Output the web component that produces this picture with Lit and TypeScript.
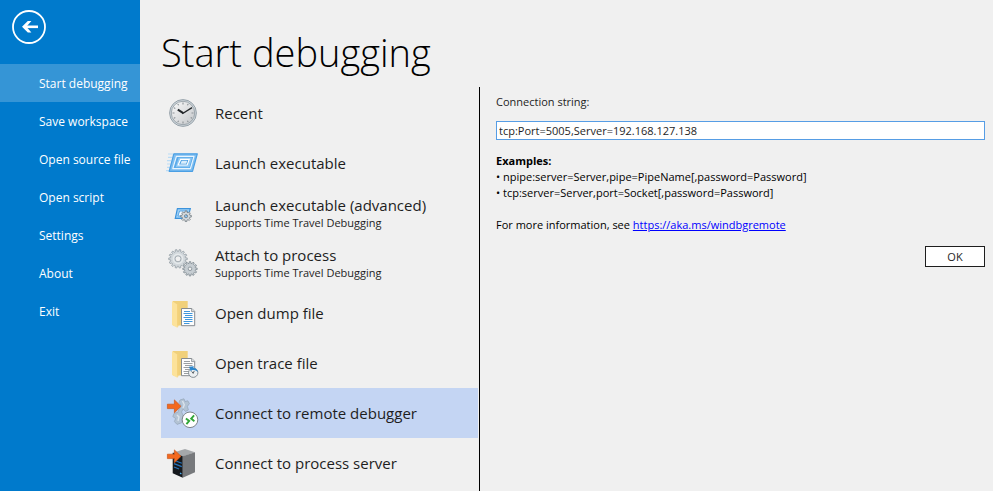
import { LitElement, html, css, svg, nothing } from "lit";
import { customElement, state } from "lit/decorators.js";
import { classMap } from "lit/directives/class-map.js";

/** Outline of a cog with square teeth around a centre point. */
function cog(cx: number, cy: number, outer: number, inner: number, teeth: number): string {
  const points: string[] = [];
  const step = (Math.PI * 2) / teeth;
  for (let i = 0; i < teeth; i++) {
    const a = i * step;
    const corners: [number, number][] = [
      [inner, -0.3],
      [outer, -0.2],
      [outer, 0.2],
      [inner, 0.3],
    ];
    for (const [r, f] of corners) {
      const t = a + f * step;
      points.push(`${(cx + r * Math.cos(t)).toFixed(2)} ${(cy + r * Math.sin(t)).toFixed(2)}`);
    }
  }
  return `M${points.join("L")}Z`;
}

const ring = (cx: number, cy: number, r: number) =>
  `M${cx - r} ${cy}a${r} ${r} 0 1 0 ${2 * r} 0a${r} ${r} 0 1 0 ${-2 * r} 0Z`;

const arrow = svg`
  <path d="M.4 7.2H7.4V2.9L14 9.3L7.4 15.8V11.6H.4Z" fill="#f4691e" stroke="#c9541a" stroke-width=".7"/>`;

const folder = svg`
  <path d="M6 4H20.7V28.5H6Z" fill="#f0d07a"/>
  <path d="M5 4L10.3 7.6V30.8L5 28Z" fill="#fce29a"/>
  <path d="M10.3 7.6V30.8L11.5 29V7Z" fill="#f5d27a"/>`;

const page = (ink: string) => svg`
  <path d="M14.5 11.5H24.8L27.7 14.4V28.7H14.5Z" fill="#fdfdfd" stroke="#858b90"/>
  <path d="M24.6 11.5V14.6H27.7" fill="#dde1e4" stroke="#858b90" stroke-width=".8"/>
  <path d="M17 14.5H23M16.5 16.5H25.5M18 18.5H25.5M16.5 20.5H25.5M18 22.5H25.5M16.5 24.5H25.5M17 26.5H22.5" stroke=${ink} fill="none"/>`;

const icons = {
  clock: svg`
    <defs>
      <linearGradient id="face" x1="0" y1="0" x2="1" y2="1">
        <stop offset="0" stop-color="#fafafa"/><stop offset="1" stop-color="#c3c6c9"/>
      </linearGradient>
    </defs>
    <circle cx="16" cy="16" r="13.4" fill="#cdd5da" stroke="#98a3ab" stroke-width="1"/>
    <circle cx="16" cy="16" r="11.7" fill="url(#face)" stroke="#8d989f" stroke-width=".8"/>
    <path d="M16 5.5V7.5M16 24.5V26.5M5.5 16H7.5M24.5 16H26.5M10.8 6.9L11.6 8.3M21.2 6.9L20.4 8.3M6.9 10.8L8.3 11.6M6.9 21.2L8.3 20.4M10.8 25.1L11.6 23.7M21.2 25.1L20.4 23.7M25.1 21.2L23.7 20.4" stroke="#8b9196" stroke-width="1.1"/>
    <path d="M10.8 12.6L16.3 16.2" stroke="#23272a" stroke-width="2"/>
    <path d="M15.3 16.7L25 10.6" stroke="#23272a" stroke-width="1.3"/>`,
  launch: svg`
    <path d="M1 7H6M1 10.3H5M0 13.7H4M0 17H3.5M0 20.3H3M-1 23.6H2" stroke="#b9dbf5" stroke-width="1.2"/>
    <path d="M6.8 6.8H30.3L25.5 24.3H2.2Z" fill="#7dbdf0" stroke="#4a9fe4" stroke-width="1.2" stroke-linejoin="round"/>
    <path d="M9.4 9.4H27L23.4 21.6H5.8Z" fill="#5aaaea" stroke="#e9f5fe" stroke-width="1.2" stroke-linejoin="round"/>
    <path d="M11.6 10.8H25L22.4 20.2H8.7Z" fill="#8cc7f4"/>
    <path d="M13.6 12.4H22.2L20.2 18H11.2Z" fill="#4c9fe3" stroke="#fff" stroke-width="1.2"/>
    <path d="M14.7 13.8H20.2L19.2 16.8H13.5Z" fill="#d9edfb"/>`,
  launchAdvanced: svg`
    <path d="M10.4 11.7H23.3L20.7 21.3H8.3Z" fill="#9fd0f6" stroke="#3c93dc" stroke-width="1.2"/>
    <path d="M12.6 14H20.6L19.3 19H10.9Z" fill="#f4faff" stroke="#5aa7e6" stroke-width="1"/>
    <path d=${cog(19, 19.2, 5.4, 4, 8) + ring(19, 19.2, 1.6)} fill="#d5dadd" stroke="#757e84" stroke-width=".8" fill-rule="evenodd"/>`,
  gears: svg`
    <path d=${cog(11, 11.8, 9.3, 7.5, 14) + ring(11, 11.8, 3)} fill="#d2d8dc" stroke="#9ca5ab" stroke-width=".9" fill-rule="evenodd"/>
    <circle cx="11" cy="11.8" r="4.6" fill="none" stroke="#e6eaec" stroke-width="1.4"/>
    <path d=${cog(23, 21.8, 7.2, 5.5, 12) + ring(23, 21.8, 1.8)} fill="#c6cdd2" stroke="#89939a" stroke-width=".9" fill-rule="evenodd"/>`,
  dump: svg`${folder}${page("#3f97dc")}`,
  trace: svg`${folder}${page("#9a9fa3")}
    <circle cx="26.2" cy="25.7" r="4.7" fill="#eceff1" stroke="#858f96" stroke-width="1"/>
    <path d="M26.2 26.4L24.6 24.4M26.2 26.4L27.2 24" stroke="#4a5258" stroke-width=".9"/>
    <path d="M22 19.8L27 19.2L26 20.8C28.8 21 30.6 22.6 30.8 25.2C29.4 23.2 27.4 22.6 25 23L23.8 24.6Z" fill="#2c86cc"/>`,
  remote: svg`
    <path d="M13 3L17 1.8L18 4.5L20.8 3.8L22.4 6.6L20.4 9.4L21.4 13L18.6 14.4L16 12L14.6 15L16 18.2L14.6 25.8L10 27.4L7.4 24.6L8.6 21.4L5.8 19.6L7.2 16.2L10.8 15.4L12.4 11.4L14.6 9L12 5.4Z" fill="#b3c3d4" stroke="#93a5b8" stroke-width=".7"/>
    <path d="M15.5 4L17.3 7.8L16 11M10 18L12 20L11 24" fill="none" stroke="#dae3ec" stroke-width="1.4"/>
    <circle cx="23" cy="22.8" r="7.8" fill="#fff" stroke="#7d8489" stroke-width="1"/>
    <path d="M18.9 21.4L22.2 23.9L19.4 27.2M27.1 18.4L24.2 21.6L27.4 24.2" fill="none" stroke="#32a637" stroke-width="1.9"/>
    ${arrow}`,
  server: svg`
    <path d="M5.7 5.7L18 2L28 5.3L15.7 9.4Z" fill="#a5a8ab"/>
    <path d="M15.7 9.2L28 5.3V25.3L15.7 30.7Z" fill="#77797c"/>
    <path d="M5.7 5.7L15.7 9.2V30.7L5.7 26.2Z" fill="#15181c"/>
    <path d="M7 13.2L14.8 16.2M7 16.6L14.8 19.6M7 20L12 22" stroke="#2674bd" stroke-width="1.2"/>
    <path d="M13 26.2L14.4 26.8" stroke="#4eb0f2" stroke-width="1.4"/>
    ${arrow}`,
};

interface Source {
  label: string;
  note?: string;
  icon: keyof typeof icons;
}

const menu = ["Start debugging", "Save workspace", "Open source file", "Open script", "Settings", "About", "Exit"];

const sources: Source[] = [
  { label: "Recent", icon: "clock" },
  { label: "Launch executable", icon: "launch" },
  { label: "Launch executable (advanced)", note: "Supports Time Travel Debugging", icon: "launchAdvanced" },
  { label: "Attach to process", note: "Supports Time Travel Debugging", icon: "gears" },
  { label: "Open dump file", icon: "dump" },
  { label: "Open trace file", icon: "trace" },
  { label: "Connect to remote debugger", icon: "remote" },
  { label: "Connect to process server", icon: "server" },
];

@customElement("app-root")
export class AppRoot extends LitElement {
  @state() private page = "Start debugging";
  @state() private source = "Connect to remote debugger";

  static styles = css`
    :host {
      display: grid;
      grid-template-columns: 140px minmax(0, 1fr);
      min-height: 100vh;
      background: #f0f0f0;
      color: #1e1e1e;
      font-family: "Segoe UI", "Open Sans", "Noto Sans", sans-serif;
      font-size: 11px;
      line-height: 16px;
    }
    button {
      font: inherit;
      color: inherit;
      margin: 0;
      border: 0;
      background: none;
      text-align: left;
    }
    .sidebar {
      background: #007acc;
      color: #fff;
    }
    .back {
      display: block;
      margin: 10px 12px 20px;
      padding: 0;
      width: 34px;
      height: 34px;
    }
    .back svg {
      display: block;
    }
    .nav {
      display: flex;
      flex-direction: column;
    }
    .nav-item {
      height: 38px;
      padding: 2px 0 0 39px;
      font-size: 12px;
      white-space: nowrap;
    }
    .nav-item.current {
      background: #3595d6;
    }
    .main {
      display: flex;
      flex-direction: column;
      padding-left: 21px;
    }
    .title {
      margin: 0;
      padding: 24px 0 7px;
      color: #000;
      font-size: 38px;
      line-height: 56px;
      font-weight: 300;
    }
    .columns {
      flex: 1;
      display: grid;
      grid-template-columns: 318px minmax(0, 1fr);
    }
    .sources {
      display: flex;
      flex-direction: column;
      padding: 1px 1px 0 0;
    }
    .source {
      display: flex;
      align-items: center;
      gap: 16px;
      height: 50px;
      padding: 0 0 0 6px;
    }
    .source.current {
      background: #c4d5f3;
    }
    .icon {
      flex: none;
      overflow: visible;
    }
    .names {
      display: flex;
      flex-direction: column;
      white-space: nowrap;
    }
    .label {
      font-size: 15px;
      line-height: 20px;
    }
    .panel {
      display: flex;
      flex-direction: column;
      border-left: 1px solid #000;
      padding: 7px 8px 0 16px;
    }
    .field {
      display: flex;
      flex-direction: column;
      gap: 11px;
    }
    .input {
      box-sizing: border-box;
      width: 100%;
      height: 19px;
      margin: 0;
      padding: 0 2px;
      border: 1px solid #569de5;
      border-radius: 0;
      outline: 0;
      background: #fff;
      color: inherit;
      font: inherit;
    }
    .help {
      margin-top: 13px;
      color: #000;
    }
    .help p {
      margin: 0;
    }
    .help ul {
      margin: 0 0 16px;
      padding: 0;
      list-style: none;
    }
    .help li::before {
      content: "• ";
    }
    .help a {
      color: #00f;
    }
    .ok {
      align-self: flex-end;
      box-sizing: border-box;
      width: 60px;
      height: 21px;
      margin-top: 13px;
      padding: 0;
      border: 1px solid #1e1e1e;
      background: #fff;
      text-align: center;
    }
  `;

  render() {
    return html`
      <aside class="sidebar">
        <button class="back" aria-label="Back">
          <svg width="34" height="34" viewBox="0 0 34 34" fill="none" stroke="#fff">
            <circle cx="17" cy="17" r="16" stroke-width="1.8" />
            <path d="M26 16.8H13" stroke-width="2.6" />
            <path d="M10 16.8L15.8 11H19.4L14.4 16.8L19.4 22.6H15.8Z" fill="#fff" stroke="none" />
          </svg>
        </button>
        <nav class="nav">
          ${menu.map(
            (name) => html`<button
              class=${classMap({ "nav-item": true, current: name === this.page })}
              @click=${() => (this.page = name)}
            >${name}</button>`
          )}
        </nav>
      </aside>
      <main class="main">
        <h1 class="title">Start debugging</h1>
        <div class="columns">
          <div class="sources">
            ${sources.map(
              (s) => html`<button
                class=${classMap({ source: true, current: s.label === this.source })}
                @click=${() => (this.source = s.label)}
              >
                <svg class="icon" width="32" height="32" viewBox="0 0 32 32" aria-hidden="true">${icons[s.icon]}</svg>
                <span class="names">
                  <span class="label">${s.label}</span>
                  ${s.note ? html`<span>${s.note}</span>` : nothing}
                </span>
              </button>`
            )}
          </div>
          <section class="panel">
            <div class="field">
              <label for="connection">Connection string:</label>
              <input id="connection" class="input" type="text" spellcheck="false" value="tcp:Port=5005,Server=192.168.127.138" />
            </div>
            <div class="help">
              <p><b>Examples:</b></p>
              <ul>
                <li>npipe:server=Server,pipe=PipeName[,password=Password]</li>
                <li>tcp:server=Server,port=Socket[,password=Password]</li>
              </ul>
              <p>For more information, see <a href="https://aka.ms/windbgremote">https://aka.ms/windbgremote</a></p>
            </div>
            <button class="ok">OK</button>
          </section>
        </div>
      </main>
    `;
  }
}
